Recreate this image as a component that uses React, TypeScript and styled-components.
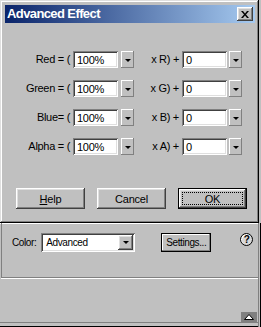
import styled, { createGlobalStyle } from "styled-components";

const GlobalStyle = createGlobalStyle`
  html, body {
    margin: 0;
    padding: 0;
    background: #c0c0c0;
  }
  body {
    font-family: "Liberation Sans", Arial, sans-serif;
    color: #000;
  }
`;

const raised = `
  box-shadow: inset -1px -1px #404040, inset 1px 1px #fff,
    inset -2px -2px #808080, inset 2px 2px #dfdfdf;
`;
const sunken = `
  box-shadow: inset 1px 1px #808080, inset -1px -1px #fff,
    inset 2px 2px #404040, inset -2px -2px #dfdfdf;
`;

const StyledPage = styled.div`
  width: 261px;
  height: 327px;
  display: flex;
  flex-direction: column;
  background: #c0c0c0;
  overflow: hidden;
`;

/* ---------- dialog ---------- */
const StyledDialog = styled.div`
  width: 259px;
  height: 223px;
  box-sizing: border-box;
  padding: 5px 4px 4px 5px;
  display: flex;
  flex-direction: column;
  background: #c0c0c0;
  box-shadow: inset -1px -1px #000, inset 1px 1px #dfdfdf,
    inset -2px -2px #808080, inset 2px 2px #fff;
`;
const StyledTitleBar = styled.div`
  height: 18px;
  display: flex;
  align-items: center;
  justify-content: space-between;
  padding: 0 2px 0 2px;
  background: linear-gradient(to right, #0a246a, #a6caf0);
`;
const StyledTitle = styled.span`
  color: #fff;
  font-weight: bold;
  font-size: 13px;
  letter-spacing: -0.6px;
  line-height: 18px;
`;
const StyledCloseButton = styled.div`
  width: 16px;
  height: 14px;
  display: flex;
  align-items: center;
  justify-content: center;
  background: #c0c0c0;
  ${raised}
`;
const StyledBody = styled.div`
  display: flex;
  flex-direction: column;
  gap: 12px;
  padding-top: 28px;
`;
const StyledRow = styled.div`
  display: flex;
  align-items: center;
  height: 17px;
`;
const StyledLabel = styled.span<{ $width: number }>`
  width: ${(p) => p.$width}px;
  margin-right: 3px;
  text-align: right;
  font-size: 11px;
  letter-spacing: -0.3px;
  line-height: 17px;
  white-space: pre;
`;
const StyledInput = styled.div`
  width: 45px;
  height: 17px;
  box-sizing: border-box;
  padding: 2px 0 0 4px;
  background: #fff;
  font-size: 11px;
  letter-spacing: -0.3px;
  line-height: 14px;
  ${sunken}
`;
const StyledDrop = styled.div<{ $gap: number }>`
  width: 13px;
  height: 17px;
  margin-left: ${(p) => p.$gap}px;
  display: flex;
  align-items: center;
  justify-content: center;
  padding-top: 1px;
  box-sizing: border-box;
  background: #c0c0c0;
  box-shadow: inset -1px -1px #808080, inset 1px 1px #fff;
`;
const StyledArrow = styled.span`
  width: 0;
  height: 0;
  border-left: 3px solid transparent;
  border-right: 3px solid transparent;
  border-top: 3px solid #000;
`;
const StyledButtonRow = styled.div`
  display: flex;
  gap: 12px;
  margin-top: 33px;
  padding-left: 11px;
`;
const StyledButton = styled.div<{ $default?: boolean }>`
  width: 69px;
  height: 21px;
  box-sizing: border-box;
  display: flex;
  align-items: center;
  justify-content: center;
  font-size: 11px;
  letter-spacing: -0.2px;
  background: #c0c0c0;
  position: relative;
  ${(p) =>
    p.$default
      ? `border: 1px solid #000; box-shadow: inset -1px -1px #404040, inset 1px 1px #fff, inset -2px -2px #808080, inset 2px 2px #dfdfdf;`
      : raised}
`;
const StyledFocus = styled.span`
  position: absolute;
  inset: 3px;
  border: 1px dotted #000;
`;

/* ---------- properties panel ---------- */
const StyledPanel = styled.div`
  flex: 1;
  display: flex;
  flex-direction: column;
  box-shadow: inset -1px 0 #000, inset -2px 0 #c0c0c0, inset -3px 0 #808080,
    inset 0 -1px #000, inset 0 -4px #c0c0c0, inset 0 -5px #808080,
    inset 0 1px #fff;
`;
const StyledUpper = styled.div`
  height: 55px;
  box-sizing: border-box;
  margin-left: 1px;
  margin-right: 3px;
  padding: 10px 0 0 10px;
  display: flex;
  align-items: flex-start;
  border-left: 1px solid #808080;
  border-bottom: 1px solid #808080;
  box-shadow: 0 1px #fff;
`;
const StyledPanelText = styled.span`
  font-size: 10px;
  letter-spacing: -0.4px;
  line-height: 19px;
  margin-right: 5px;
`;
const StyledSelect = styled.div`
  width: 94px;
  height: 19px;
  box-sizing: border-box;
  padding: 2px;
  display: flex;
  align-items: center;
  background: #fff;
  ${sunken}
`;
const StyledSelectText = styled.span`
  flex: 1;
  padding-left: 3px;
  font-size: 10px;
  letter-spacing: -0.4px;
`;
const StyledSelectArrow = styled.div`
  width: 15px;
  height: 15px;
  display: flex;
  align-items: center;
  justify-content: center;
  background: #c0c0c0;
  ${raised}
`;
const StyledSettings = styled.div`
  width: 50px;
  height: 19px;
  margin-left: 26px;
  box-sizing: border-box;
  display: flex;
  align-items: center;
  justify-content: center;
  border: 1px solid #000;
  font-size: 10px;
  letter-spacing: -0.4px;
  box-shadow: inset -1px -1px #808080, inset 1px 1px #fff;
`;
const StyledHelpIcon = styled.div`
  width: 13px;
  height: 13px;
  margin-left: 29px;
  box-sizing: border-box;
  border: 1px solid #000;
  border-radius: 50%;
  background: #d8d8d8;
  box-shadow: inset 1px 1px #fff;
  display: flex;
  align-items: center;
  justify-content: center;
  font-size: 10px;
  font-weight: bold;
  line-height: 1;
`;
const StyledLower = styled.div`
  flex: 1;
  display: flex;
  align-items: flex-end;
  justify-content: flex-end;
  padding: 0 4px 5px 0;
`;
const StyledExpand = styled.div`
  width: 16px;
  height: 10px;
  background: #808080;
  display: flex;
  align-items: center;
  justify-content: center;
`;

const rows = [
  { label: "Red = (", mult: "x R) +" },
  { label: "Green = (", mult: "x G) +" },
  { label: "Blue= (", mult: "x B) +" },
  { label: "Alpha = (", mult: "x A) +" },
];

export default function App() {
  return (
    <StyledPage>
      <GlobalStyle />
      <StyledDialog>
        <StyledTitleBar>
          <StyledTitle>Advanced Effect</StyledTitle>
          <StyledCloseButton>
            <svg width="8" height="7" viewBox="0 0 8 7">
              <path d="M0 0h2l2 2.5L6 0h2L5 3.5 8 7H6L4 4.5 2 7H0l3-3.5z" fill="#000" />
            </svg>
          </StyledCloseButton>
        </StyledTitleBar>
        <StyledBody>
          {rows.map((r) => (
            <StyledRow key={r.label}>
              <StyledLabel $width={65}>{r.label}</StyledLabel>
              <StyledInput>100%</StyledInput>
              <StyledDrop $gap={3}>
                <StyledArrow />
              </StyledDrop>
              <StyledLabel $width={45}>{r.mult}</StyledLabel>
              <StyledInput>0</StyledInput>
              <StyledDrop $gap={2}>
                <StyledArrow />
              </StyledDrop>
            </StyledRow>
          ))}
        </StyledBody>
        <StyledButtonRow>
          <StyledButton>
            <span>
              <u>H</u>elp
            </span>
          </StyledButton>
          <StyledButton>Cancel</StyledButton>
          <StyledButton $default>
            OK
            <StyledFocus />
          </StyledButton>
        </StyledButtonRow>
      </StyledDialog>
      <StyledPanel>
        <StyledUpper>
          <StyledPanelText>Color:</StyledPanelText>
          <StyledSelect>
            <StyledSelectText>Advanced</StyledSelectText>
            <StyledSelectArrow>
              <StyledArrow />
            </StyledSelectArrow>
          </StyledSelect>
          <StyledSettings>Settings...</StyledSettings>
          <StyledHelpIcon>?</StyledHelpIcon>
        </StyledUpper>
        <StyledLower>
          <StyledExpand>
            <svg width="10" height="6" viewBox="0 0 10 6">
              <path d="M5 0.5L9.5 5.5H0.5Z" fill="#fff" stroke="#000" strokeWidth="1" />
            </svg>
          </StyledExpand>
        </StyledLower>
      </StyledPanel>
    </StyledPage>
  );
}
